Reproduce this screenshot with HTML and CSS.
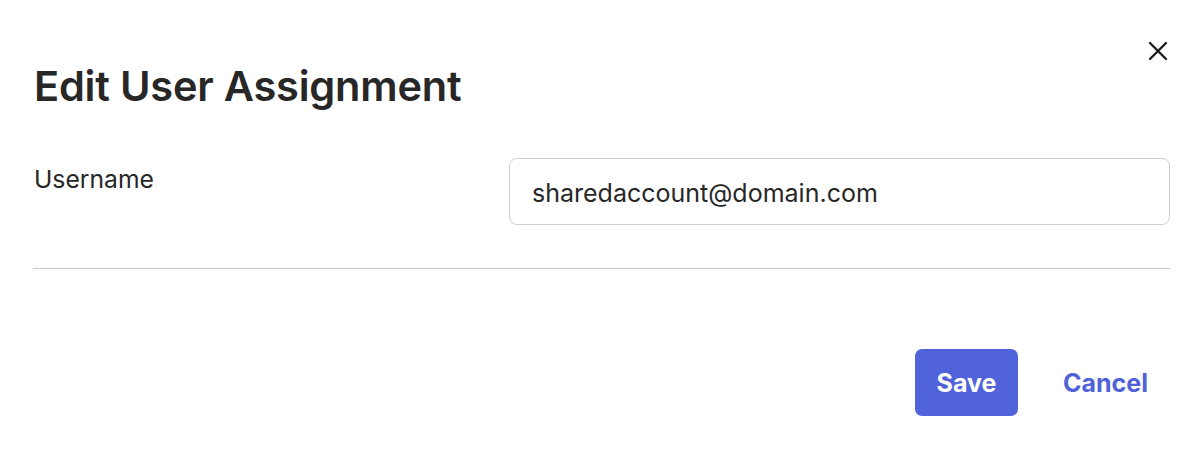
FILE: index.html
```html
<!DOCTYPE html>
<html>
<head>
<meta charset="utf-8">
<link rel="stylesheet" href="styles.css">
</head>
<body>
<div class="dialog">
  <div class="header">
    <h1 class="title">Edit User Assignment</h1>
    <button class="close" aria-label="Close">
      <svg width="20" height="20" viewBox="0 0 20 20"><path d="M2 2 L18 18 M18 2 L2 18" stroke="#1d1d21" stroke-width="2.4" stroke-linecap="round" fill="none"/></svg>
    </button>
  </div>
  <div class="field">
    <label class="label">Username</label>
    <div class="input">sharedaccount@domain.com</div>
  </div>
  <hr class="divider">
  <div class="footer">
    <button class="btn-primary">Save</button>
    <button class="btn-link">Cancel</button>
  </div>
</div>
</body>
</html>
```
FILE: styles.css
```css
html, body { margin: 0; padding: 0; background: #fff; }
body { font-family: Inter, "Noto Sans", sans-serif; color: #1d1d21; }
.dialog { padding: 0 32px 0 33px; }
.header { display: flex; justify-content: space-between; align-items: flex-start; }
.title { margin: 62px 0 0 1px; font-size: 41.5px; font-weight: 600; line-height: 48px; letter-spacing: -0.2px; color: #272727; }
.close { margin: 41px 2px 0 0; padding: 0; border: 0; background: none; width: 20px; height: 20px; cursor: pointer; }
.close svg { display: block; }
.field { display: flex; margin-top: 48px; }
.label { width: 475px; padding-left: 1px; font-size: 24.7px; line-height: 30px; padding-top: 6px; color: #272727; }
.input { flex: 1; height: 67px; box-sizing: border-box; border: 1px solid #cfcfd3; border-radius: 8px; padding: 2px 22px 0; display: flex; align-items: center; font-size: 25px; color: #272727; }
.divider { margin: 43px 0 0 0; border: 0; border-top: 1px solid #c9c9cc; }
.footer { display: flex; justify-content: flex-end; align-items: center; margin-top: 80px; gap: 23px; }
.btn-primary { background: #5063da; color: #fff; border: 0; border-radius: 7px; width: 103px; height: 67px; font-family: Inter, sans-serif; font-size: 25px; font-weight: 700; cursor: pointer; }
.btn-link { background: none; border: 0; color: #4f62d8; font-family: Inter, sans-serif; font-size: 25px; font-weight: 700; padding: 0 22px; height: 67px; cursor: pointer; }
```
